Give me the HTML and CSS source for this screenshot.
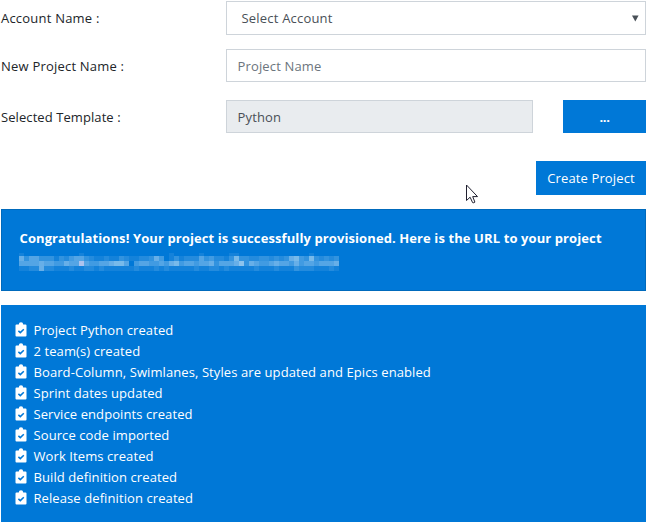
FILE: index.html
```html
<!DOCTYPE html>
<html lang="en">
<head>
<meta charset="utf-8">
<title>Create Project</title>
<link rel="stylesheet" href="styles.css">
</head>
<body>
<main class="page">
  <form class="form">
    <div class="row account"><label class="label">Account Name :</label><div class="field select"><span>Select Account</span><svg class="caret" width="7" height="7" viewBox="0 0 7 7"><path d="M0 .5h6.6L3.3 6.5z" fill="#495057"/></svg></div></div>
    <div class="row name"><label class="label">New Project Name :</label><div class="field placeholder">Project Name</div></div>
    <div class="row template"><label class="label">Selected Template :</label><div class="field disabled">Python</div><button type="button" class="btn browse">...</button></div>
    <div class="actions"><button type="button" class="btn create">Create Project</button></div>
  </form>
  <section class="panel success">
    <p class="message">Congratulations! Your project is successfully provisioned. Here is the URL to your project</p>
    <svg class="mosaic" width="320" height="18" viewBox="0 0 320 18" shape-rendering="crispEdges"></svg>
  </section>
  <section class="panel log">
    <ul class="steps">
      <li>Project Python created</li>
      <li>2 team(s) created</li>
      <li>Board-Column, Swimlanes, Styles are updated and Epics enabled</li>
      <li>Sprint dates updated</li>
      <li>Service endpoints created</li>
      <li>Source code imported</li>
      <li>Work Items created</li>
      <li>Build definition created</li>
      <li>Release definition created</li>
    </ul>
  </section>
  <svg class="cursor" width="14" height="21" viewBox="0 0 14 21"><path d="M.5 1v15.5l3.6-3.3 2.5 5.4q1.3.6 2.3-.5L6.7 12.6h4.8z" fill="#fff" stroke="#202030"/></svg>
</main>
<script src="script.js"></script>
</body>
</html>
```
FILE: styles.css
```css
* { box-sizing: border-box; }
body { margin: 0; background: #fff; font: 13px/21px "Open Sans", "Noto Sans", sans-serif; color: #212529; }
.page { position: relative; width: 647px; height: 523px; padding: 1px 1px 0; overflow: hidden; }
.form { height: 208px; }
.row { display: flex; align-items: center; height: 34px; }
.name { height: 33px; margin-top: 14px; }
.template { height: 33px; margin-top: 18px; }
.label { width: 225px; letter-spacing: .21px; }
.name .label, .name .field, .template .label, .template .field { padding-top: 2px; }
.template .label { letter-spacing: .08px; }
.field { display: flex; align-items: center; flex: 1; height: 100%; border: 1px solid #ced4da; padding: 0 10.5px; color: #495057; letter-spacing: .15px; }
.select { justify-content: space-between; padding: 0 6px 0 14.5px; letter-spacing: .2px; }
.placeholder { color: #6c757d; }
.disabled { background: #e9ecef; }
.btn { border: 0; padding: 0; background: #0078d7; color: #fff; font: inherit; }
.browse { width: 83px; height: 33px; margin-left: 30px; padding-top: 2px; font-weight: 700; letter-spacing: -.4px; }
.actions { display: flex; justify-content: flex-end; margin-top: 28px; }
.create { width: 110px; height: 34px; letter-spacing: .13px; }
.panel { background: #0078d7; color: #fff; }
.success { height: 82px; border: 1px solid #006abc; padding: 18px 18px 0 17.5px; }
.message { margin: 0; font-weight: 700; letter-spacing: .1px; white-space: nowrap; }
.mosaic { display: block; margin: 4px 0 0 -.5px; }
.log { height: 217px; margin-top: 14px; padding: 15px 14px; }
.steps { margin: 0; padding: 0; list-style: none; }
.steps li { display: flex; align-items: center; height: 21px; letter-spacing: .09px; white-space: nowrap; }
.clip { width: 12px; height: 15px; margin: -2px 6.5px 0 0; flex: none; }
.cursor { position: absolute; left: 466px; top: 184px; }
```
FILE: script.js
```js
document.querySelectorAll('.steps li').forEach(li => {
  li.innerHTML = '<svg class="clip" viewBox="0 0 12 15"><path d="M1.5 2.5h2.3a2.2 2.2 0 0 1 4.4 0h2.3q1 0 1 1v10q0 1-1 1h-9q-1 0-1-1v-10q0-1 1-1z" fill="#fff"/><path d="M3.4 8.9l1.9 1.7L8.8 7.2" fill="none" stroke="#0078d7" stroke-width="1.5"/></svg><span>' + li.textContent + '</span>';
});

// Redacted address: each digit is the brightness of one mosaic cell.
const rows = [
  [0, 3, '1000000000001000000000000000001000001000001100000000000000100000'],
  [3, 5, '6355333132455321121132112236401312225342213733223323236743732323'],
  [8, 5, '5555655446559544556775045544546745545563555683654456554645545556'],
  [13, 5, '1122622111211221211111121112121111121122121111121112111322211121']
];
const colors = ['#0078d7', '#1482da', '#248bdd', '#3293df', '#419be2', '#54a5e5', '#67afe8', '#78baea', '#8dc3ed', '#adc3ee'];
document.querySelector('.mosaic').innerHTML = rows.map(([y, h, cells]) =>
  [...cells].map((c, i) => `<rect x="${i * 5}" y="${y}" width="5" height="${h}" fill="${colors[c]}"/>`).join('')
).join('');
```
